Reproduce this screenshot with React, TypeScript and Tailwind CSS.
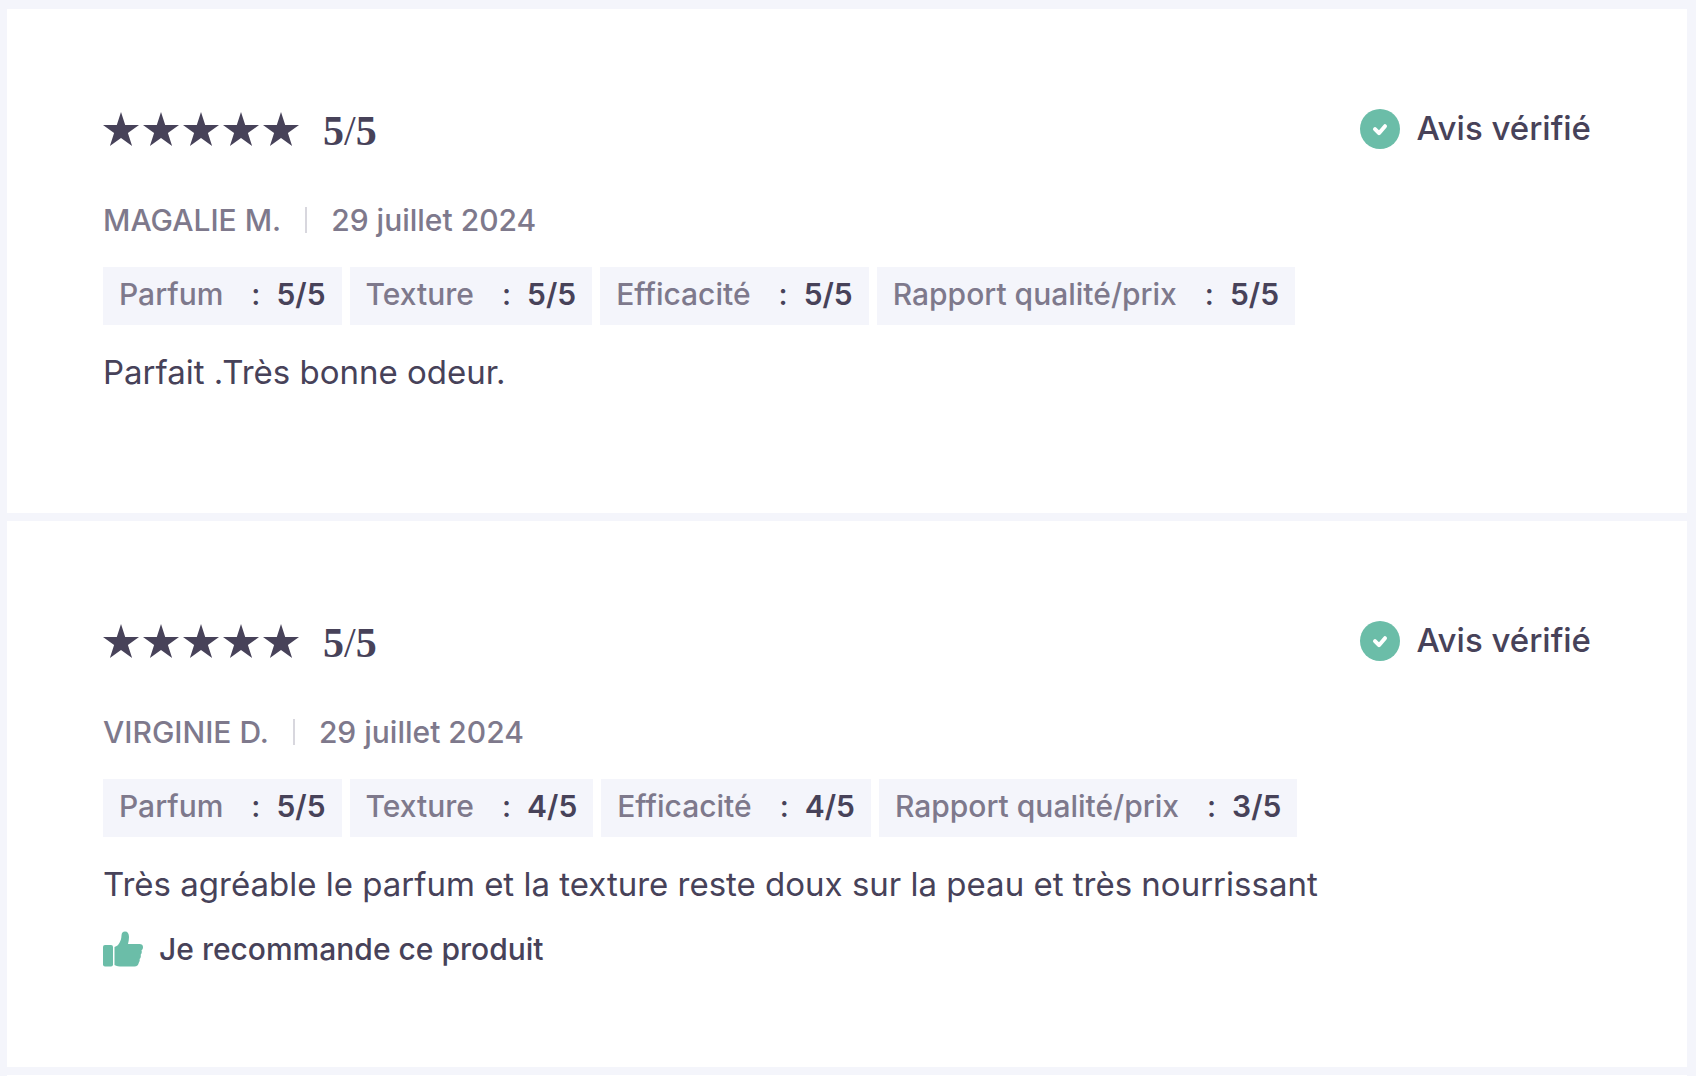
import React from 'react';

interface Rating {
  label: string;
  value: number;
}

interface Review {
  id: number;
  score: number;
  author: string;
  date: string;
  ratings: Rating[];
  comment: string;
  recommended: boolean;
}

const reviews: Review[] = [
  {
    id: 1,
    score: 5,
    author: 'MAGALIE M.',
    date: '29 juillet 2024',
    ratings: [
      { label: 'Parfum', value: 5 },
      { label: 'Texture', value: 5 },
      { label: 'Efficacité', value: 5 },
      { label: 'Rapport qualité/prix', value: 5 },
    ],
    comment: 'Parfait .Très bonne odeur.',
    recommended: false,
  },
  {
    id: 2,
    score: 5,
    author: 'VIRGINIE D.',
    date: '29 juillet 2024',
    ratings: [
      { label: 'Parfum', value: 5 },
      { label: 'Texture', value: 4 },
      { label: 'Efficacité', value: 4 },
      { label: 'Rapport qualité/prix', value: 3 },
    ],
    comment: 'Très agréable le parfum et la texture reste doux sur la peau et très nourrissant',
    recommended: true,
  },
];

const Star: React.FC = () => (
  <svg viewBox="0 0 36 34" className="h-[34px] w-9" fill="currentColor" aria-hidden="true">
    <path d="M18 0l4.2 13H36L24.9 21.1 29.1 34 18 26 6.9 34l4.2-12.9L0 13h13.8z" />
  </svg>
);

const VerifiedIcon: React.FC = () => (
  <svg viewBox="0 0 40 40" className="size-10" aria-hidden="true">
    <circle cx="20" cy="20" r="20" fill="#6bbda8" />
    <path
      d="M15 20.2l4 4 6-7"
      fill="none"
      stroke="#fff"
      strokeWidth="4"
      strokeLinecap="round"
      strokeLinejoin="round"
    />
  </svg>
);

const ThumbIcon: React.FC = () => (
  <svg viewBox="0 0 40 36" className="h-9 w-10" fill="#6bbda8" aria-hidden="true">
    <rect x="0" y="14" width="10" height="21.5" rx="2" />
    <path d="M11.5 16c2.5-.6 3.8-2.1 5-4.2 1.3-2.3 1.9-4.3 2-7.3C18.6 2 19.8.5 22 .5c2.700 0 4 2 4 5.500 0 2.500-.4 4.700-1 7h11.500c2.200 0 3.500 1.200 3.500 3 0 1.500-.5 2.500-1.500 3.300.6 1.600.3 3.200-.8 4.400.4 1.700 0 3.200-1.100 4.400.3 1.400 0 2.600-.8 3.700-.4 2.400-1.800 3.700-4.300 3.700H19c-3 0-5.500-.5-7.500-1.500z" />
  </svg>
);

const ReviewCard: React.FC<{ review: Review }> = ({ review }) => (
  <article className="bg-white px-24 pt-[92px] pb-[98px]">
    <div className="flex h-14 items-center justify-between">
      <div className="flex items-center gap-6">
        <div className="flex gap-1" role="img" aria-label={`${review.score} étoiles`}>
          {Array.from({ length: review.score }).map((_, i) => (
            <Star key={i} />
          ))}
        </div>
        <p className="pt-1 font-['Liberation_Serif',serif] text-[42px] leading-10 font-bold">
          {review.score}
          <span className="font-normal">/</span>5
        </p>
      </div>
      <p className="flex items-center gap-4 text-[33px] leading-[38px] font-medium">
        <VerifiedIcon />
        <span className="pb-0.5">Avis vérifié</span>
      </p>
    </div>

    <div className="mt-11 flex items-center gap-6 text-[30px] leading-[38px] font-medium text-[#7e798c]">
      <span>{review.author}</span>
      <span className="h-[26px] w-0.5 bg-[#d8d7de]" />
      <span>{review.date}</span>
    </div>

    <ul className="mt-7 flex flex-wrap gap-2 text-[30px] leading-[54px] font-medium">
      {review.ratings.map((rating) => (
        <li key={rating.label} className="flex bg-[#f4f5fb] px-4 pb-1">
          <span className="mr-7 text-[#7e798c]">{rating.label}</span>
          <span className="mr-4">:</span>
          <span className="font-semibold">{rating.value}/5</span>
        </li>
      ))}
    </ul>

    <p className="mt-6 text-[33px] leading-[46px]">{review.comment}</p>

    <div className="pt-5">
      {review.recommended && (
        <p className="flex items-center gap-4 pt-0.5 text-[30px] leading-10 font-medium">
          <ThumbIcon />
          Je recommande ce produit
        </p>
      )}
    </div>
  </article>
);

export default function App() {
  return (
    <main className="flex min-h-screen flex-col gap-2 bg-[#f4f5fb] pt-[9px] pr-[9px] pl-[7px] font-['Inter',sans-serif] text-[#474259]">
      {reviews.map((review) => (
        <ReviewCard key={review.id} review={review} />
      ))}
      <div className="h-px bg-white" />
    </main>
  );
}
